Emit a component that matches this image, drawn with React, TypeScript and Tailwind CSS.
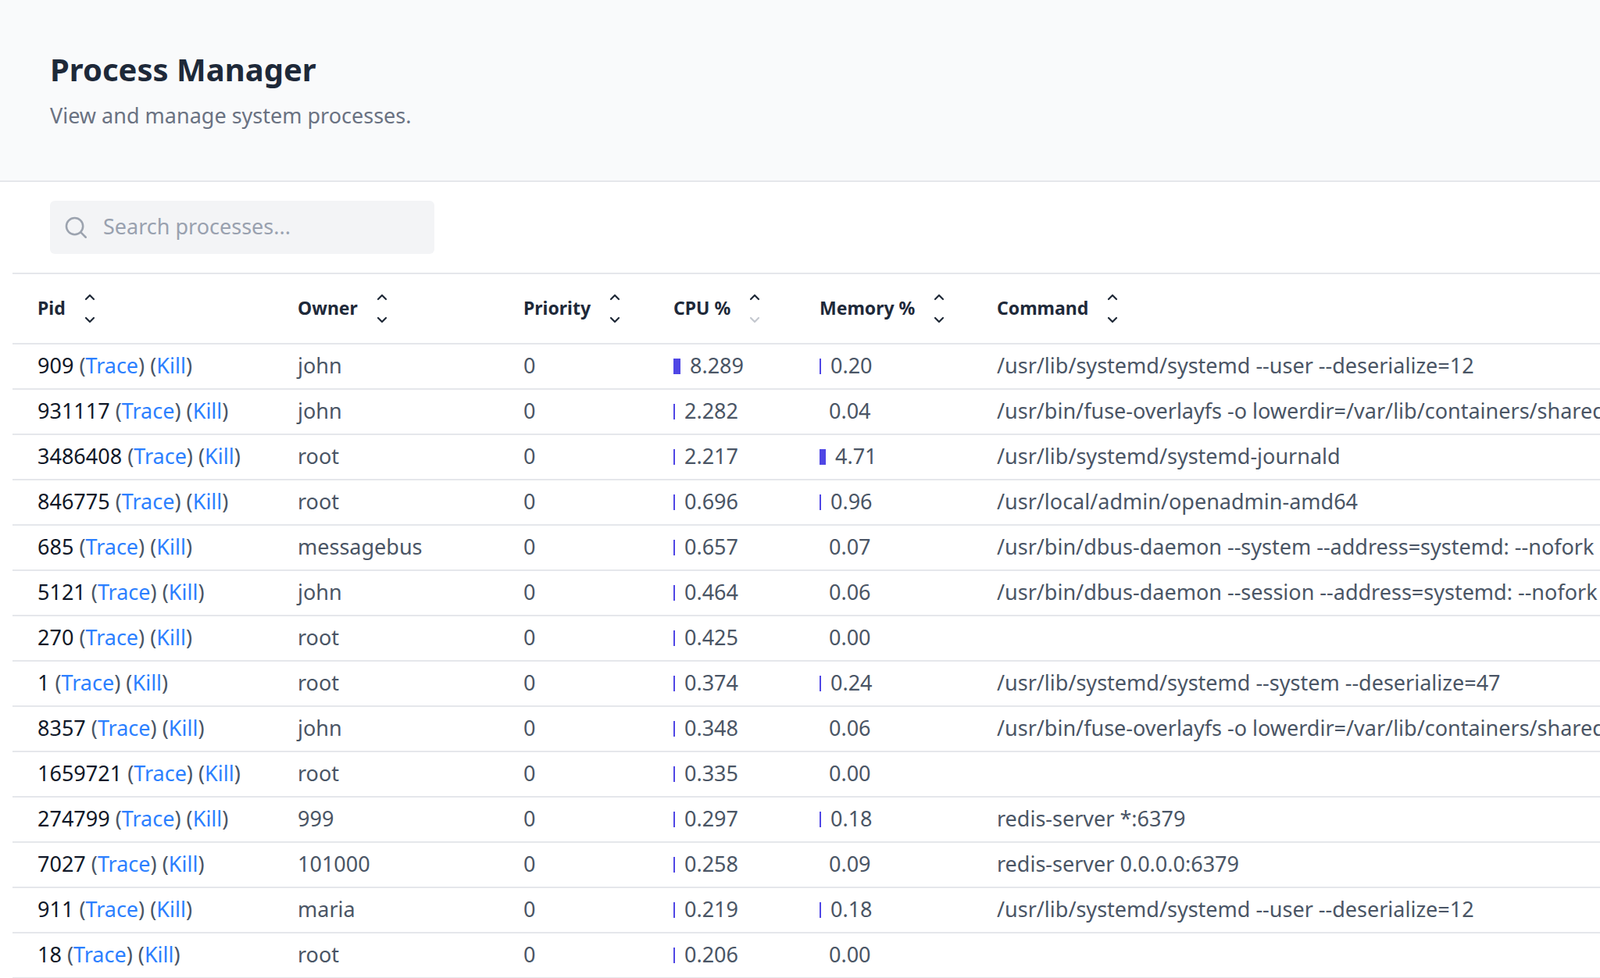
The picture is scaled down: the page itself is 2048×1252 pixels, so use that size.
import React from "react";

type Row = {
  pid: string;
  owner: string;
  cpu: string;
  cpuBar: number;
  mem: string;
  memBar: number;
  cmd: string;
};

const rows: Row[] = [
  { pid: "909", owner: "john", cpu: "8.289", cpuBar: 9, mem: "0.20", memBar: 2, cmd: "/usr/lib/systemd/systemd --user --deserialize=12" },
  { pid: "931117", owner: "john", cpu: "2.282", cpuBar: 2, mem: "0.04", memBar: 0, cmd: "/usr/bin/fuse-overlayfs -o lowerdir=/var/lib/containers/shared-st" },
  { pid: "3486408", owner: "root", cpu: "2.217", cpuBar: 2, mem: "4.71", memBar: 8, cmd: "/usr/lib/systemd/systemd-journald" },
  { pid: "846775", owner: "root", cpu: "0.696", cpuBar: 2, mem: "0.96", memBar: 2, cmd: "/usr/local/admin/openadmin-amd64" },
  { pid: "685", owner: "messagebus", cpu: "0.657", cpuBar: 2, mem: "0.07", memBar: 0, cmd: "/usr/bin/dbus-daemon --system --address=systemd: --nofork --" },
  { pid: "5121", owner: "john", cpu: "0.464", cpuBar: 2, mem: "0.06", memBar: 0, cmd: "/usr/bin/dbus-daemon --session --address=systemd: --nofork -" },
  { pid: "270", owner: "root", cpu: "0.425", cpuBar: 2, mem: "0.00", memBar: 0, cmd: "" },
  { pid: "1", owner: "root", cpu: "0.374", cpuBar: 2, mem: "0.24", memBar: 2, cmd: "/usr/lib/systemd/systemd --system --deserialize=47" },
  { pid: "8357", owner: "john", cpu: "0.348", cpuBar: 2, mem: "0.06", memBar: 0, cmd: "/usr/bin/fuse-overlayfs -o lowerdir=/var/lib/containers/shared-st" },
  { pid: "1659721", owner: "root", cpu: "0.335", cpuBar: 2, mem: "0.00", memBar: 0, cmd: "" },
  { pid: "274799", owner: "999", cpu: "0.297", cpuBar: 2, mem: "0.18", memBar: 2, cmd: "redis-server *:6379" },
  { pid: "7027", owner: "101000", cpu: "0.258", cpuBar: 2, mem: "0.09", memBar: 0, cmd: "redis-server 0.0.0.0:6379" },
  { pid: "911", owner: "maria", cpu: "0.219", cpuBar: 2, mem: "0.18", memBar: 2, cmd: "/usr/lib/systemd/systemd --user --deserialize=12" },
  { pid: "18", owner: "root", cpu: "0.206", cpuBar: 2, mem: "0.00", memBar: 0, cmd: "" },
];

const cols = [
  { label: "Pid", w: "w-[333px] shrink-0" },
  { label: "Owner", w: "w-[289px] shrink-0" },
  { label: "Priority", w: "w-[192px] shrink-0" },
  { label: "CPU %", w: "w-[187px] shrink-0", dimDown: true },
  { label: "Memory %", w: "w-[227px] shrink-0" },
  { label: "Command", w: "flex-1" },
];

function SortIcon({ dimDown }: { dimDown?: boolean }) {
  return (
    <svg width="18" height="40" viewBox="0 0 18 40" fill="none" strokeWidth="2.2" strokeLinecap="round" strokeLinejoin="round" className="ml-[22px]">
      <path d="M4 8 L9 3 L14 8" stroke="#1f2937" />
      <path d="M4 32 L9 37 L14 32" stroke={dimDown ? "#c4c8cf" : "#1f2937"} />
    </svg>
  );
}

function Bar({ w }: { w: number }) {
  return <span className="inline-block h-[20px] mr-[12px] bg-[#4f46e5] shrink-0" style={{ width: w }} />;
}

export default function App() {
  return (
    <div className="min-h-screen bg-white font-['Liberation_Sans'] overflow-hidden">
      <div className="bg-gray-50 border-b-2 border-gray-200 px-16 pt-[64px] pb-[62px]">
        <h1 className="text-[40px] font-bold text-gray-800 leading-tight">Process Manager</h1>
        <p className="mt-[14px] text-[27px] text-gray-500">View and manage system processes.</p>
      </div>
      <div className="px-16 pt-[24px] pb-[24px]">
        <div className="w-[492px] h-[68px] bg-gray-100 rounded-md flex items-center px-[16px] gap-[18px]">
          <svg width="34" height="34" viewBox="0 0 24 24" fill="none" stroke="#9ca3af" strokeWidth="1.8" strokeLinecap="round">
            <circle cx="11" cy="11" r="7.5" />
            <path d="M16.5 16.5 L21 21" />
          </svg>
          <span className="text-[27px] text-gray-400">Search processes...</span>
        </div>
      </div>
      <div className="ml-4 w-[2100px]">
        <div className="flex items-center h-[92px] border-y-2 border-gray-200 px-8 whitespace-nowrap">
          {cols.map((c) => (
            <div key={c.label} className={`${c.w} flex items-center`}>
              <span className="text-[23px] font-bold text-gray-800">{c.label}</span>
              <SortIcon dimDown={c.dimDown} />
            </div>
          ))}
        </div>
        {rows.map((r) => (
          <div key={r.pid} className="flex items-center h-[58px] border-b-2 border-gray-200 px-8 whitespace-nowrap text-[27px] text-gray-600">
            <div className="w-[333px] shrink-0 text-gray-900">
              {r.pid} <span className="text-gray-600">(</span>
              <span className="text-blue-500">Trace</span>
              <span className="text-gray-600">)</span> <span className="text-gray-600">(</span>
              <span className="text-blue-500">Kill</span>
              <span className="text-gray-600">)</span>
            </div>
            <div className="w-[289px] shrink-0">{r.owner}</div>
            <div className="w-[192px] shrink-0">0</div>
            <div className="w-[187px] shrink-0 flex items-center">
              <Bar w={r.cpuBar} />
              {r.cpu}
            </div>
            <div className="w-[227px] shrink-0 flex items-center">
              <Bar w={r.memBar} />
              {r.mem}
            </div>
            <div className="flex-1">{r.cmd}</div>
          </div>
        ))}
      </div>
    </div>
  );
}
